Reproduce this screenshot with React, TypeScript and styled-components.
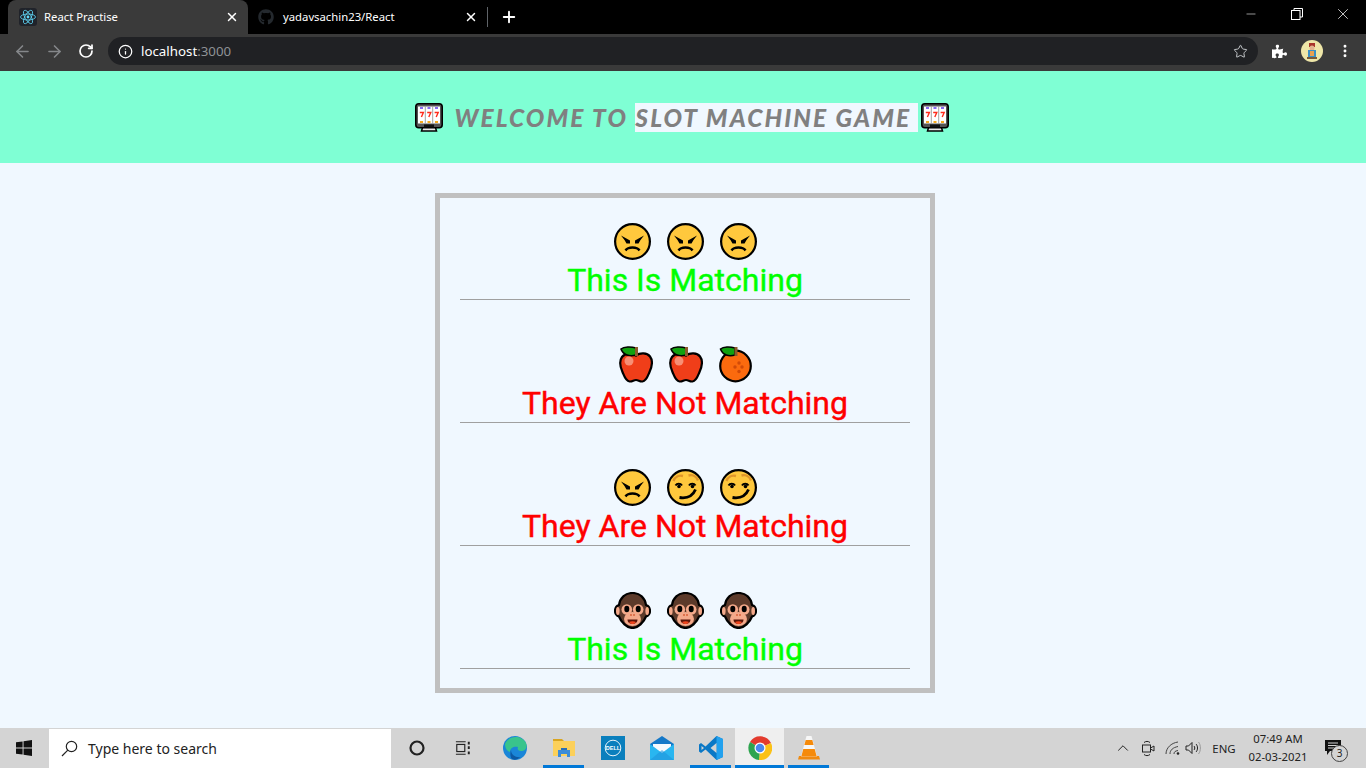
import React from 'react';
import styled, { createGlobalStyle } from 'styled-components';
import { ArrowLeft, ArrowRight, RotateCw, Info, Star, Plus, X, Minus, MoreVertical, ChevronUp } from 'lucide-react';
import { FaGithub, FaPuzzlePiece } from 'react-icons/fa';

const GlobalStyle = createGlobalStyle`
  html, body, #root { margin: 0; padding: 0; height: 100%; }
  body { overflow: hidden; font-family: "Noto Sans", "Liberation Sans", sans-serif; }
`;

const Page = styled.div`
  width: 1366px;
  height: 768px;
  display: flex;
  flex-direction: column;
  background: #f0f8ff;
`;

/* browser chrome */
const TabStrip = styled.div`
  height: 34px;
  background: #000;
  display: flex;
  align-items: flex-end;
  padding-left: 8px;
  color: #fff;
`;

const Tab = styled.div<{ $active?: boolean }>`
  width: 240px;
  height: 34px;
  box-sizing: border-box;
  display: flex;
  align-items: center;
  padding: ${p => (p.$active ? '0 9px 0 11px' : '0 10px')};
  gap: ${p => (p.$active ? '7px' : '9px')};
  border-radius: 8px 8px 0 0;
  background: ${p => (p.$active ? '#3a3a3a' : 'transparent')};
  font-size: 11.3px;
`;

const TabTitle = styled.span`
  flex: 1;
  padding-bottom: 2px;
  white-space: nowrap;
`;

const TabDivider = styled.div`
  width: 1px;
  height: 20px;
  margin: 0 0 7px -1px;
  background: #5f6368;
`;

const NewTab = styled.div`
  width: 42px;
  height: 34px;
  display: flex;
  align-items: center;
  justify-content: center;
`;

const WindowControls = styled.div`
  margin-left: auto;
  display: flex;
  height: 34px;
`;

const WindowButton = styled.div`
  width: 46px;
  height: 28px;
  display: flex;
  align-items: center;
  justify-content: center;
`;

const Toolbar = styled.div`
  height: 37px;
  background: #3a3a3a;
  display: flex;
  align-items: center;
  padding: 0 0 3px 6px;
  box-sizing: border-box;
`;

const NavButton = styled.div`
  width: 32px;
  display: flex;
  justify-content: center;
  align-items: center;
`;

const AddressBar = styled.div`
  width: 1150px;
  height: 28px;
  margin-left: 6px;
  border-radius: 14px;
  background: #202124;
  display: flex;
  align-items: center;
  padding: 0 10px;
  box-sizing: border-box;
  color: #fff;
  font-size: 13.3px;
`;

const Host = styled.span`
  margin-left: 8px;
  flex: 1;
`;

const Port = styled.span`
  color: #8f9296;
`;

const ToolbarRight = styled.div`
  display: flex;
  align-items: center;
  margin-left: 14px;
  gap: 14px;
`;

const Avatar = styled.div`
  width: 22px;
  height: 22px;
  border-radius: 50%;
  overflow: hidden;
  background: #eee6a8;
`;

/* game */
const Header = styled.header`
  height: 92px;
  background: #7fffd4;
  display: flex;
  align-items: center;
  justify-content: center;
  gap: 3px;
  padding-right: 2px;
`;

const Title = styled.h1`
  margin: 0;
  padding-left: 9px;
  font-family: Lato, "Liberation Sans", sans-serif;
  font-size: 24.5px;
  font-weight: 900;
  font-style: italic;
  letter-spacing: 2.08px;
  line-height: 29px;
  color: #808080;
  white-space: pre;
`;

const Highlight = styled.span`
  display: inline-block;
  background: #f0f8ff;
  height: 29px;
`;

const Main = styled.main`
  flex: 1;
  display: flex;
  justify-content: center;
  padding: 30px 0 0 4px;
`;

const Board = styled.section`
  width: 500px;
  height: 500px;
  box-sizing: border-box;
  border: 5px solid #c0c0c0;
  padding-top: 25px;
  display: flex;
  flex-direction: column;
  align-items: center;
`;

const Round = styled.div`
  width: 450px;
  height: 123px;
  box-sizing: border-box;
  border-bottom: 1px solid #a0a0a0;
  display: flex;
  flex-direction: column;
  align-items: center;
  justify-content: flex-end;
  &:first-child { height: 77px; }
`;

const Reels = styled.div`
  display: flex;
  gap: 16px;
  height: 37px;
  align-items: center;
  margin-bottom: 1px;
`;

const Verdict = styled.div<{ $match: boolean }>`
  font-family: Roboto, "Liberation Sans", sans-serif;
  font-size: 32px;
  line-height: 38px;
  color: ${p => (p.$match ? '#00ff00' : '#ff0000')};
  -webkit-text-stroke: 0.4px currentColor;
  white-space: nowrap;
`;

/* taskbar */
const Taskbar = styled.footer`
  height: 40px;
  background: #d4d4d4;
  display: flex;
  align-items: stretch;
  color: #111;
`;

const StartButton = styled.div`
  width: 49px;
  display: flex;
  align-items: center;
  justify-content: center;
  padding-right: 1px;
  box-sizing: border-box;
`;

const SearchBox = styled.div`
  width: 342px;
  height: 39px;
  margin-top: 1px;
  background: #fff;
  display: flex;
  align-items: center;
  gap: 10px;
  padding-left: 12px;
  box-sizing: border-box;
  font-size: 14px;
  color: #222;
`;

const TaskButton = styled.div<{ $w: number; $inset?: number }>`
  width: ${p => p.$w}px;
  padding-right: ${p => p.$inset ?? 0}px;
  box-sizing: border-box;
  display: flex;
  align-items: center;
  justify-content: center;
`;

const AppButton = styled.div<{ $running?: boolean; $focused?: boolean }>`
  width: 49px;
  position: relative;
  display: flex;
  align-items: center;
  justify-content: center;
  background: ${p => (p.$focused ? '#efefef' : 'transparent')};
  &::after {
    content: '';
    display: ${p => (p.$running ? 'block' : 'none')};
    position: absolute;
    bottom: 0;
    left: ${p => (p.$focused ? '0' : '4px')};
    right: ${p => (p.$focused ? '0' : '4px')};
    height: 3px;
    background: #0078d7;
  }
`;

const Tray = styled.div`
  margin-left: auto;
  padding-right: 10px;
  display: flex;
  align-items: center;
  font-size: 11.4px;
  color: #222;
`;

const TraySlot = styled.div<{ $w: number }>`
  width: ${p => p.$w}px;
  display: flex;
  align-items: center;
  justify-content: center;
`;

const Clock = styled.div`
  width: 64px;
  text-align: center;
  line-height: 18px;
  font-size: 11.3px;
  white-space: nowrap;
`;

const Notify = styled.div`
  width: 46px;
  height: 40px;
  position: relative;
  display: flex;
  align-items: center;
  justify-content: center;
`;

const NotifyBadge = styled.div`
  position: absolute;
  left: 21px;
  top: 17px;
  width: 15px;
  height: 15px;
  border: 1px solid #444;
  border-radius: 50%;
  background: #d4d4d4;
  font-size: 10px;
  line-height: 15px;
  text-align: center;
`;

/* emoji drawings */
const FaceBase = ({ children }: { children: React.ReactNode }) => (
  <svg width="37" height="37" viewBox="0 0 37 37">
    <circle cx="18.5" cy="18.5" r="17.4" fill="#ffc83d" stroke="#000" strokeWidth="2.2" />
    {children}
  </svg>
);

const Angry = () => (
  <FaceBase>
    <path d="M7 12.500L16 17.500V20.500H12.500L10.500 17zM30 12.500L21 17.500V20.500H24.500L26.500 17z" />
    <path d="M11.500 27.500c2.500-4 11.500-4 14 0" stroke="#000" strokeWidth="2.400" fill="none" />
  </FaceBase>
);

const Smirk = () => (
  <FaceBase>
    <path d="M6.500 12c1.500-4 5.500-6 9.500-5M21.500 6.500c4-1 8 1 9.500 5" stroke="#e0962a" strokeWidth="2.400" fill="none" />
    <path d="M8.500 16.500c1.500-2.500 5-2.500 6.500 0M22 16.500c1.500-2.500 5-2.500 6.500 0" stroke="#000" strokeWidth="2" fill="none" />
    <circle cx="12" cy="17.500" r="1.800" />
    <circle cx="25.500" cy="17.500" r="1.800" />
    <path d="M12.500 28.500c6.500 1 13-1 16-8" stroke="#000" strokeWidth="2.800" fill="none" />
  </FaceBase>
);

const Apple = () => (
  <svg width="34" height="37" viewBox="0 0 34 37">
    <path d="M17 9.500C21 6.500 28 6.500 31 10.500c3 4 2 10-.5 15.500-1.500 3.500-3 9-7 9.500-3 .3-4-1.500-6.500-1.500s-3.500 1.800-6.500 1.500c-4-.5-5.500-6-7-9.500C1 20.500.5 14.500 3 11c3-4 10-4.500 14-1.500z" fill="#f03e19" stroke="#000" strokeWidth="2.200" />
    <path d="M2 3C5 .5 12 .5 17 2v7c-6 2-13 0-15-6z" fill="#11a10f" stroke="#000" strokeWidth="1.600" />
    <rect x="16" y="1" width="3" height="9" fill="#8a5a2b" />
    <circle cx="10" cy="15" r="4.500" fill="#f78f75" />
  </svg>
);

const Orange = () => (
  <svg width="33" height="37" viewBox="0 0 33 37">
    <circle cx="16.500" cy="20" r="15.300" fill="#fb6a0e" stroke="#000" strokeWidth="2.200" />
    <path d="M1.500 3C4.500 .5 11 .5 16 2v7c-6 2-12.500 0-14.500-6z" fill="#11a10f" stroke="#000" strokeWidth="1.600" />
    <rect x="15.500" y="1" width="3" height="9" fill="#8a5a2b" />
    <g fill="#d14a08">
      <circle cx="20" cy="17" r="1.700" /><circle cx="16" cy="21" r="1.700" />
      <circle cx="23" cy="21" r="1.700" /><circle cx="20" cy="25.500" r="1.700" />
    </g>
  </svg>
);

const Monkey = () => (
  <svg width="37" height="37" viewBox="0 0 37 37">
    <path d="M18.500 1C26 1 31 6 32 13c3 1 4 4 4 6s-1.500 5-4 5.500C30 30 24 36 18.500 36S7 30 5 24.500C2.500 24 1 21 1 19s1-5 4-6C6 6 11 1 18.500 1z" fill="#5c3a2a" stroke="#000" strokeWidth="2.200" />
    <ellipse cx="3.800" cy="19" rx="1.800" ry="4" fill="#f4a98a" />
    <ellipse cx="33.200" cy="19" rx="1.800" ry="4" fill="#f4a98a" />
    <circle cx="12.800" cy="17.500" r="5.300" fill="#f4a98a" />
    <circle cx="24.200" cy="17.500" r="5.300" fill="#f4a98a" />
    <ellipse cx="18.500" cy="27" rx="8.500" ry="7" fill="#f4a98a" />
    <ellipse cx="12.800" cy="17" rx="2.500" ry="3.200" />
    <ellipse cx="24.200" cy="17" rx="2.500" ry="3.200" />
    <circle cx="17" cy="23" r="1" fill="#d9623a" />
    <circle cx="20" cy="23" r="1" fill="#d9623a" />
    <path d="M13.500 27.500h10c0 3-2.500 4.500-5 4.500s-5-1.500-5-4.500z" fill="#5a1408" />
    <path d="M15 30c2-1 5-1 7 0-1 1.500-2.200 2-3.500 2s-2.500-.5-3.500-2z" fill="#f0441c" />
  </svg>
);

const SlotMachine = () => (
  <svg width="28" height="29" viewBox="0 0 28 29">
    <path d="M8 23h12l1.500 5h-15z" fill="#e8e8e8" stroke="#000" strokeWidth="1.500" />
    <rect x=".8" y=".8" width="26.400" height="24" rx="3" fill="#555" stroke="#000" strokeWidth="1.600" />
    <rect x="3" y="3.500" width="22" height="17" fill="#fff" />
    <path d="M10.300 3.500v17M17.700 3.500v17" stroke="#8a8a8a" strokeWidth=".8" />
    <g fill="#8a6cf0"><rect x="5" y="4" width="3" height="2" /><rect x="12.500" y="4" width="3" height="2" /><rect x="20" y="4" width="3" height="2" /></g>
    <path d="M4.800 9.500h3.600l-2 4.500M12.200 9.500h3.600l-2 4.500M19.600 9.500h3.600l-2 4.500" fill="none" stroke="#ff2a1a" strokeWidth="1.400" />
    <g fill="#f7a81b"><rect x="5" y="18" width="3" height="2" /><rect x="12.500" y="18" width="3" height="2" /><rect x="20" y="18" width="3" height="2" /></g>
    <rect x="9" y="21.500" width="10" height="3" fill="#111" />
  </svg>
);

/* chrome + taskbar drawings */
const ReactLogo = () => (
  <svg width="18" height="18" viewBox="0 0 18 18">
    <rect width="18" height="18" rx="3" fill="#20232a" />
    <g fill="none" stroke="#61dafb" strokeWidth=".8">
      <ellipse cx="9" cy="9" rx="7.500" ry="3" />
      <ellipse cx="9" cy="9" rx="7.500" ry="3" transform="rotate(60 9 9)" />
      <ellipse cx="9" cy="9" rx="7.500" ry="3" transform="rotate(120 9 9)" />
    </g>
    <circle cx="9" cy="9" r="1.400" fill="#61dafb" />
  </svg>
);

const RestoreIcon = () => (
  <svg width="12" height="12" viewBox="0 0 12 12" fill="none" stroke="#fff">
    <rect x=".5" y="2.500" width="8.500" height="9" />
    <path d="M3 2.500V.5h8.500v8.500H9" />
  </svg>
);

const ProfilePic = () => (
  <svg width="22" height="22" viewBox="0 0 22 22">
    <rect x="8" y="3" width="6" height="4" fill="#a8342a" />
    <circle cx="11" cy="8" r="2.500" fill="#e3b58f" />
    <rect x="7" y="10" width="8" height="7" fill="#3b8fc4" />
    <rect x="9" y="11" width="4" height="5" fill="#e8a050" />
    <rect x="6" y="17" width="10" height="2" fill="#7a5a3a" />
  </svg>
);

const WindowsLogo = () => (
  <svg width="16" height="16" viewBox="0 0 17 17" fill="#111">
    <path d="M0 2.500l7-1v6.500H0zM8 1.300L17 0v8H8zM0 9h7v6.500l-7-1zM8 9h9v8l-9-1.300z" />
  </svg>
);

const SearchGlass = () => (
  <svg width="17" height="17" viewBox="0 0 17 17" fill="none" stroke="#222" strokeWidth="1.200">
    <circle cx="10.500" cy="6.500" r="5.200" />
    <path d="M6.800 10.200L1 16" />
  </svg>
);

const TaskView = () => (
  <svg width="16" height="16" viewBox="0 0 18 16" fill="none" stroke="#222" strokeWidth="1.300">
    <path d="M1 1h11M1 15h11" />
    <rect x="2" y="4" width="9" height="8" />
    <path d="M15.500 1v3M15.500 6v3M15.500 12v3" strokeWidth="2.200" />
  </svg>
);

const EdgeIcon = () => (
  <svg width="24" height="24" viewBox="0 0 24 24">
    <circle cx="12" cy="12" r="12" fill="#1a86d8" />
    <path d="M2 8C5 0 18-2 23 7c2 5-1 8-5 8-3 0-4-2-3-4-3-1-8 0-8 5-3-1-5-4-5-8z" fill="#39c48c" />
    <path d="M8 14c0 5 5 8 10 7-3 2-5 3-8 2.500C7 23 7 17 8 14z" fill="#0c59a4" />
  </svg>
);

const FolderIcon = () => (
  <svg width="22" height="22" viewBox="0 0 22 22">
    <path d="M0 2h9l2 2H0z" fill="#d9a520" />
    <rect y="4" width="22" height="15" fill="#fcd05a" />
    <path d="M5 13h12v7h-3v-3H8v3H5z" fill="#3c8cd8" />
    <rect x="8" y="11" width="6" height="2" fill="#2a6fb5" />
  </svg>
);

const DellIcon = () => (
  <svg width="24" height="24" viewBox="0 0 24 24">
    <rect width="24" height="24" fill="#0a7fbd" />
    <circle cx="12" cy="12" r="7.800" fill="none" stroke="#fff" strokeWidth=".9" />
    <text x="12" y="13.800" fontSize="5.500" fontWeight="700" textAnchor="middle" fill="#fff" fontFamily="Liberation Sans, sans-serif">DELL</text>
  </svg>
);

const MailIcon = () => (
  <svg width="24" height="24" viewBox="0 0 24 24">
    <path d="M0 8L12 0l12 8v15H0z" fill="#1478c8" />
    <path d="M3 8h18v4l-9 6-9-6z" fill="#f4f9fd" />
    <path d="M0 8l12 9 12-9v16H0z" fill="#29b6f0" />
    <path d="M0 24L12 14l12 10z" fill="#1f94dc" opacity=".6" />
  </svg>
);

const VsCodeIcon = () => (
  <svg width="24" height="24" viewBox="0 0 24 24">
    <path d="M17.500 0L24 3v18l-6.500 3-11-10.500L2 17 0 15.500v-7L2 7l4.500 3.500z" fill="#0b78c6" />
    <path d="M17.500 0L24 3v18l-6.500 3z" fill="#22a1ee" />
    <path d="M17.500 7l-6 5 6 5z" fill="#d4d4d4" />
    <path d="M2.500 10l2.500 2-2.500 2z" fill="#d4d4d4" />
  </svg>
);

const ChromeIcon = () => (
  <svg width="24" height="24" viewBox="0 0 24 24">
    <path d="M12 12L2 6A12 12 0 0 1 23 7z" fill="#e33b2e" />
    <path d="M12 12L23 7a12 12 0 0 1-12 17z" fill="#fbc116" />
    <path d="M12 12l-1 12A12 12 0 0 1 2 6z" fill="#2ea44f" />
    <circle cx="12" cy="12" r="5.500" fill="#fff" />
    <circle cx="12" cy="12" r="4.300" fill="#4a88ee" />
  </svg>
);

const VlcIcon = () => (
  <svg width="22" height="24" viewBox="0 0 22 24">
    <path d="M1 20h20l1 3.500H0z" fill="#f08a10" />
    <path d="M8.500 0h5l5.500 20.500H3z" fill="#f7f7f7" />
    <path d="M7.700 4h6.600l1.300 5H6.400zM5.300 13h11.400l2 7.500H3.300z" fill="#f58a0b" />
  </svg>
);

const CameraTray = () => (
  <svg width="14" height="17" viewBox="0 0 14 17" fill="none" stroke="#222">
    <rect x="1.500" y="5" width="8" height="7" />
    <path d="M9.500 8l3.500-2v5l-3.500-2M3 2.500c2-1.500 4-1.500 6 0M3 14.500c2 1.500 4 1.500 6 0" />
  </svg>
);

const WifiTray = () => (
  <svg width="15" height="14" viewBox="0 0 15 14" fill="none" stroke="#444">
    <path d="M1 13C1 7 6 2 13 1M5 13c0-4 3-6.500 8-7.500M9 13c0-2 1-3 4-3.500" />
    <circle cx="13" cy="12.500" r="1.300" fill="#222" stroke="none" />
  </svg>
);

const VolumeTray = () => (
  <svg width="16" height="14" viewBox="0 0 16 14" fill="none" stroke="#222">
    <path d="M1 5h2.500L7 1.500v11L3.500 9H1z" />
    <path d="M9 5c1 1 1 3 0 4M11 3c2 2 2 6 0 8" />
    <path d="M13.500 1c2.500 3 2.500 9 0 12" stroke="#999" />
  </svg>
);

const NotifyGlyph = () => (
  <svg width="16" height="16" viewBox="0 0 16 16">
    <path d="M0 0h16v11H5l-3 4v-4H0z" fill="#111" />
    <path d="M3 3h10M3 5.500h10M3 8h7" stroke="#d4d4d4" />
  </svg>
);

const rounds: { reels: React.FC[]; match: boolean }[] = [
  { reels: [Angry, Angry, Angry], match: true },
  { reels: [Apple, Apple, Orange], match: false },
  { reels: [Angry, Smirk, Smirk], match: false },
  { reels: [Monkey, Monkey, Monkey], match: true },
];

const apps = [
  { Icon: EdgeIcon },
  { Icon: FolderIcon, running: true },
  { Icon: DellIcon },
  { Icon: MailIcon },
  { Icon: VsCodeIcon, running: true },
  { Icon: ChromeIcon, running: true, focused: true },
  { Icon: VlcIcon, running: true },
];

const App: React.FC = () => (
  <Page>
    <GlobalStyle />
    <TabStrip>
      <Tab $active>
        <ReactLogo />
        <TabTitle>React Practise</TabTitle>
        <X size={14} strokeWidth={2.5} />
      </Tab>
      <Tab>
        <FaGithub size={16} color="#24292e" />
        <TabTitle>yadavsachin23/React</TabTitle>
        <X size={14} strokeWidth={2.5} />
      </Tab>
      <TabDivider />
      <NewTab><Plus size={18} strokeWidth={2.5} /></NewTab>
      <WindowControls>
        <WindowButton><Minus size={14} strokeWidth={1} /></WindowButton>
        <WindowButton><RestoreIcon /></WindowButton>
        <WindowButton><X size={18} strokeWidth={1} /></WindowButton>
      </WindowControls>
    </TabStrip>
    <Toolbar>
      <NavButton><ArrowLeft size={19} color="#85878a" strokeWidth={2} /></NavButton>
      <NavButton><ArrowRight size={19} color="#85878a" strokeWidth={2} /></NavButton>
      <NavButton><RotateCw size={16} color="#fff" strokeWidth={2.6} /></NavButton>
      <AddressBar>
        <Info size={15} color="#fff" strokeWidth={2} />
        <Host>localhost<Port>:3000</Port></Host>
        <Star size={15} color="#c4c7ca" strokeWidth={1.6} />
      </AddressBar>
      <ToolbarRight>
        <FaPuzzlePiece size={15} color="#fff" />
        <Avatar><ProfilePic /></Avatar>
        <MoreVertical size={16} color="#fff" strokeWidth={2.4} />
      </ToolbarRight>
    </Toolbar>

    <Header>
      <SlotMachine />
      <Title>WELCOME TO <Highlight>SLOT MACHINE GAME </Highlight></Title>
      <SlotMachine />
    </Header>

    <Main>
      <Board>
        {rounds.map((round, i) => (
          <Round key={i}>
            <Reels>
              {round.reels.map((Reel, j) => <Reel key={j} />)}
            </Reels>
            <Verdict $match={round.match}>
              {round.match ? 'This Is Matching' : 'They Are Not Matching'}
            </Verdict>
          </Round>
        ))}
      </Board>
    </Main>

    <Taskbar>
      <StartButton><WindowsLogo /></StartButton>
      <SearchBox>
        <SearchGlass />
        Type here to search
      </SearchBox>
      <TaskButton $w={52}>
        <svg width="16" height="16" viewBox="0 0 16 16" fill="none" stroke="#222" strokeWidth="2.200"><circle cx="8" cy="8" r="6.500" /></svg>
      </TaskButton>
      <TaskButton $w={47} $inset={7}><TaskView /></TaskButton>
      {apps.map((app, i) => (
        <AppButton key={i} $running={app.running} $focused={app.focused}>
          <app.Icon />
        </AppButton>
      ))}
      <Tray>
        <TraySlot $w={25}><ChevronUp size={18} strokeWidth={1.3} /></TraySlot>
        <TraySlot $w={25}><CameraTray /></TraySlot>
        <TraySlot $w={24}><WifiTray /></TraySlot>
        <TraySlot $w={18}><VolumeTray /></TraySlot>
        <TraySlot $w={44}>ENG</TraySlot>
        <Clock>07:49 AM<br />02-03-2021</Clock>
        <Notify>
          <NotifyGlyph />
          <NotifyBadge>3</NotifyBadge>
        </Notify>
      </Tray>
    </Taskbar>
  </Page>
);

export default App;
